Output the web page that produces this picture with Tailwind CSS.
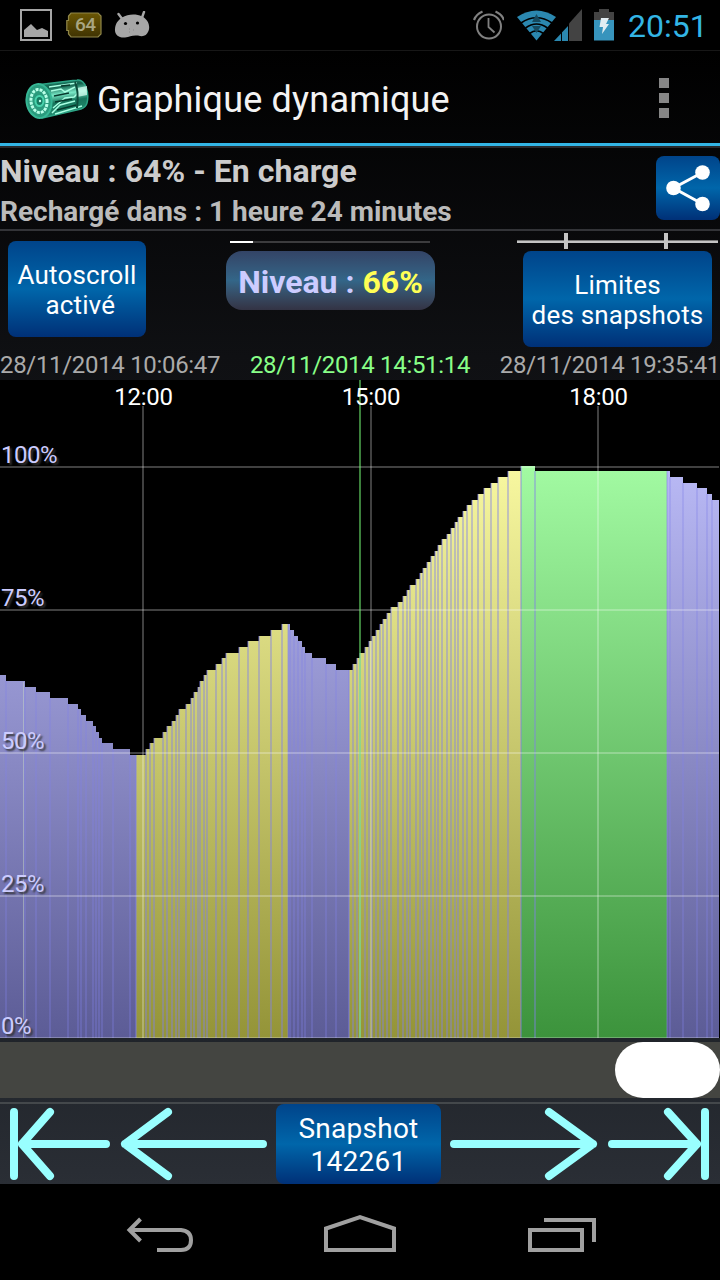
<!DOCTYPE html>
<html lang="fr">

<head>
    <meta charset="UTF-8">
    <meta name="viewport" content="width=device-width, initial-scale=1.0">
    <title>Graphique dynamique</title>
    <script src="https://cdn.jsdelivr.net/npm/@tailwindcss/browser@4"></script>
</head>

<body class="bg-black font-[Roboto,sans-serif] text-white">
    <div class="w-[720px] h-[1280px] flex flex-col overflow-hidden bg-black">

        <!-- Status bar -->
        <div class="h-[50px] shrink-0 flex items-center justify-between pl-5 pr-3.5">
            <div class="flex items-center">
                <svg class="w-8 h-8" viewBox="0 0 32 32">
                    <rect x="1" y="1" width="30" height="30" fill="none" stroke="#a6a6a6" stroke-width="2" />
                    <path d="M4 28V21L11 15L17 21L22 19L28 22V28Z" fill="#a6a6a6" />
                </svg>
                <div class="relative ml-[14px] w-9 h-[26px]">
                    <svg class="absolute inset-0" width="36" height="26" viewBox="0 0 36 26">
                        <defs>
                            <linearGradient id="gold" x1="0" y1="0" x2="0" y2="1">
                                <stop offset="0" stop-color="#6b5704" />
                                <stop offset="1" stop-color="#3f3302" />
                            </linearGradient>
                        </defs>
                        <path d="M5 1H32L35 4V22L32 25H5L2.500 22V18.500H.8V8.500H2.500V4Z" fill="url(#gold)" stroke="#8f8648" stroke-width="1.200" />
                    </svg>
                    <div class="absolute left-[9px] top-[3px] text-[19px] leading-5 tracking-[-0.5px] font-medium text-[#a9a682]">64</div>
                </div>
                <svg class="ml-3 w-[36px] h-[28px]" viewBox="0 0 36 28">
                    <path d="M4.500 3L9 9M30 1L27.500 8" stroke="#a6a6a6" stroke-width="2.400" stroke-linecap="round" />
                    <path d="M8 6.500C14 3 22 2.500 28 5.500C34 8 36.500 15 34.500 20C32.500 25 29 26 24 24.500C18 24 16 25.500 11 26.500C4 27 .5 23 1 18C1.200 13 4 9 8 6.500Z" fill="#a6a6a6" />
                    <circle cx="11.500" cy="12.500" r="1.600" /><circle cx="23.500" cy="12" r="1.600" />
                    <path d="M15.500 17.500v1M15.500 20.500v1M19.500 18.500v1" stroke="#888" />
                </svg>
            </div>
            <div class="flex items-center">
                <svg class="w-8 h-8" viewBox="0 0 32 32" fill="none" stroke="#808080">
                    <circle cx="17" cy="17.500" r="12" stroke-width="2" />
                    <path d="M16.500 9V18L22.500 23.500" stroke-width="1.800" />
                    <path d="M2 11Q4 5.500 10.500 2.500M32 11Q30 5.500 23.500 2.500" stroke-width="2.200" />
                </svg>
                <svg class="ml-[13px] -mr-px w-[66px] h-8" viewBox="0 0 66 32">
                    <path d="M19.500 31.500L0 8Q19.500 -5 39 8Z" fill="#2b88b0" />
                    <g fill="none" stroke="#000" stroke-width="1.700">
                        <path d="M4 14Q19.500 3.500 35 14" />
                        <path d="M8.500 19Q19.500 11 30.500 19" />
                        <path d="M12.500 24.500Q19.500 19 26.500 24.500" />
                    </g>
                    <path d="M19.500 5L24 13H15ZM15 17H24L19.500 24Z" fill="#164b61" />
                    <path d="M37 32L51 17V32Z" fill="#2b88b0" />
                    <path d="M52 32V14.500L65 0V32Z" fill="#434343" />
                    <path d="M44.500 23V32M51.500 15V32" stroke="#000" />
                </svg>
                <svg class="ml-3 w-5 h-8" viewBox="0 0 20 32">
                    <path d="M0 3H5V0H15V3H20V12H0Z" fill="#434343" />
                    <path d="M0 11H20V31.500H0Z" fill="#3794bd" />
                    <path d="M7 9H15L12 15H15L8 25L9 18H5.500Z" fill="#e2edf2" />
                </svg>
                <div class="ml-3.5 w-[78px] pt-px text-[32px] leading-[50px] text-[#33b5e5] whitespace-nowrap">20:51</div>
            </div>
        </div>

        <div class="h-[1134px] shrink-0 flex flex-col bg-[linear-gradient(#000,#0f1013_27%,#1f2329_86%,#2a2e35)]">

            <!-- Action bar -->
            <div class="h-[93px] shrink-0 flex items-center justify-between border-t border-[#171717] pl-[25px] pr-[51px] pt-[2px]">
                <div class="flex items-center pt-[4px]">
                    <svg class="w-[65px] h-[42px]" viewBox="0 0 65 42">
                        <defs>
                            <linearGradient id="metal" x1="0" y1="0" x2=".2" y2="1">
                                <stop offset="0" stop-color="#2a9b7d" />
                                <stop offset=".25" stop-color="#10604c" />
                                <stop offset=".45" stop-color="#79e8c6" />
                                <stop offset=".65" stop-color="#16745b" />
                                <stop offset="1" stop-color="#239072" />
                            </linearGradient>
                        </defs>
                        <path d="M11 6L52 1Q58 0 61 8Q64 16 62 24Q61 28 56 30L17 39Z" fill="url(#metal)" stroke="#2ca385" stroke-width="1.500" />
                        <g fill="none" stroke="#a8ffe2" stroke-width="1.500">
                            <path d="M24 8L52 4M26 12L36 10L40 13L50 8M27 34L35 26L50 22M28 29L40 19L49 18L53 14M30 35L57 27" />
                        </g>
                        <path d="M29 17L44 14M30 23L47 20M32 31L51 26M36 7L45 6" stroke="#07392d" stroke-width="1.500" />
                        <path d="M52 9L62 7V16L52 18Z" fill="#d5fff2" opacity=".75" />
                        <path d="M50 3Q54 11 52 29" fill="none" stroke="#0d4b3b" stroke-width="2" />
                        <ellipse cx="14" cy="22" rx="12.500" ry="17" transform="rotate(-7 14 22)" fill="#2a9b7d" stroke="#37b795" stroke-width="2" />
                        <ellipse cx="14" cy="22" rx="8" ry="11.500" transform="rotate(-7 14 22)" fill="none" stroke="#b8ffe8" stroke-width="3" stroke-dasharray="3 1" />
                        <ellipse cx="14.500" cy="22" rx="4" ry="5" fill="#167b61" stroke="#48d4ad" stroke-width="2" />
                        <circle cx="15" cy="22" r="1.200" fill="#c8fff0" />
                    </svg>
                    <h1 class="ml-[7px] text-[36px] leading-[48px] tracking-[0.19px] text-[#f3f3f3] whitespace-nowrap">Graphique dynamique</h1>
                </div>
                <div class="flex flex-col gap-[5px] w-2.5">
                    <div class="h-2.5 bg-[#868686]"></div>
                    <div class="h-2.5 bg-[#868686]"></div>
                    <div class="h-2.5 bg-[#868686]"></div>
                </div>
            </div>
            <div class="h-[5px] shrink-0 border-t-3 border-[#33b5e5] bg-[#27292b]"></div>

            <!-- Battery state -->
            <div class="h-[83px] shrink-0 flex justify-between border-b-2 border-[#333438] font-bold">
                <div class="whitespace-nowrap">
                    <div class="h-[45px] text-[32px] leading-[46px] tracking-[0.04px] text-[#cccccc]">Niveau : 64% - En charge</div>
                    <div class="text-[28px] leading-[38px] text-[#bbbbbb]">Rechargé dans : 1 heure 24 minutes</div>
                </div>
                <button class="mt-2 w-16 h-16 rounded-lg bg-linear-to-b from-[#00448a] via-[#0066aa] to-[#003077]">
                    <svg class="w-16 h-16" viewBox="0 0 64 64" fill="#fff">
                        <path d="M46.500 16.500L17.500 32L46.500 48" fill="none" stroke="#fff" stroke-width="3" />
                        <circle cx="17.500" cy="32" r="7.300" /><circle cx="46.500" cy="16.500" r="7.300" /><circle cx="46.500" cy="48" r="7.300" />
                    </svg>
                </button>
            </div>

            <!-- Controls -->
            <div class="h-[119px] shrink-0 flex items-start pl-2">
                <button class="mt-[10px] w-[138px] h-24 rounded-lg bg-linear-to-b from-[#00448a] via-[#0066aa] to-[#003077] pt-0.5 text-[26px] leading-[30px] tracking-[0.15px] whitespace-nowrap">Autoscroll<br>&nbsp;activé</button>
                <div class="ml-20 mt-[10px] w-[209px]">
                    <div class="ml-1 w-[200px] h-0.5 bg-[#3c3c3e]"><div class="w-[23px] h-0.5 bg-white"></div></div>
                    <div class="mt-2 h-[59px] rounded-2xl bg-linear-to-b from-[#334466] via-[#336688] to-[#333344] text-center text-[32px] leading-[62px] font-bold text-[#ccccff] whitespace-nowrap">Niveau : <span class="text-[#ffff55]">66%</span></div>
                </div>
                <div class="ml-[82px] w-[203px]">
                    <svg class="block" width="203" height="20" shape-rendering="crispEdges">
                        <path d="M0 9H201V12H0Z" fill="#777" />
                        <path d="M0 10H201V12H0ZM47 2H51V18H47ZM147 2H151V18H147Z" fill="#c4c4c4" />
                    </svg>
                    <button class="ml-[6px] w-[189px] h-24 rounded-lg bg-linear-to-b from-[#00448a] via-[#0066aa] to-[#003077] pt-0.5 text-[26px] leading-[30px] tracking-[0.2px] whitespace-nowrap">Limites<br>des snapshots</button>
                </div>
            </div>
            <div class="h-[30px] shrink-0 flex justify-between text-[24px] leading-[30px] tracking-[-0.32px] text-[#aaaaaa] whitespace-nowrap">
                <span>28/11/2014 10:06:47</span>
                <span class="text-[#88ff88]">28/11/2014 14:51:14</span>
                <span>28/11/2014 19:35:41</span>
            </div>

            <!-- Chart -->
            <svg class="block shrink-0 overflow-visible bg-black" width="720" height="658" viewBox="0 380 720 658" shape-rendering="crispEdges">
                <defs>
                    <linearGradient id="blue" gradientUnits="userSpaceOnUse" x1="0" y1="466" x2="0" y2="1038">
                        <stop offset="0" stop-color="#b9b9f5" /><stop offset="1" stop-color="#5c5c96" />
                    </linearGradient>
                    <linearGradient id="yellow" gradientUnits="userSpaceOnUse" x1="0" y1="466" x2="0" y2="1038">
                        <stop offset="0" stop-color="#f8f8a0" /><stop offset="1" stop-color="#949438" />
                    </linearGradient>
                    <linearGradient id="green" gradientUnits="userSpaceOnUse" x1="0" y1="466" x2="0" y2="1038">
                        <stop offset="0" stop-color="#a2faa2" /><stop offset="1" stop-color="#3c933c" />
                    </linearGradient>
                </defs>
                <g id="bars"></g>
                <g fill="#fff" fill-opacity=".25">
                    <path d="M0 466H719V468H0ZM0 609H719V611H0ZM0 752H719V754H0ZM0 895H719V897H0ZM0 1037H719V1038H0Z" />
                    <path d="M142 406H144V1038H142ZM370 406H372V1038H370ZM597 406H599V1038H597Z" />
                </g>
                <path d="M23 682H24V1038H23Z" fill="#c5d5c5" fill-opacity=".5" />
                <path d="M359 380H361V1038H359Z" fill="#77ff77" fill-opacity=".5" />
                <g class="text-[24px] tracking-[-0.3px]" fill="#fff" text-anchor="middle">
                    <text x="143.500" y="405">12:00</text>
                    <text x="371" y="405">15:00</text>
                    <text x="598.500" y="405">18:00</text>
                </g>
                <g class="text-[24px] tracking-[-0.5px] [text-shadow:2px_2px_2px_#333]" fill="#ccccff">
                    <text x="1" y="463">100%</text>
                    <text x="1" y="606">75%</text>
                    <text x="1" y="749">50%</text>
                    <text x="1" y="892">25%</text>
                    <text x="1" y="1034">0%</text>
                </g>
            </svg>

            <!-- Scroll bar -->
            <div class="h-[64px] shrink-0 flex items-center">
                <div class="w-full h-14 flex justify-end bg-[#444541]">
                    <div class="w-[105px] h-14 rounded-[28px] bg-white"></div>
                </div>
            </div>

            <!-- Snapshot navigation -->
            <div class="h-[82px] shrink-0 flex border-t-2 border-[#44484b]">
                <svg class="shrink-0" width="276" height="80" fill="none" stroke="#99ffff" stroke-width="8" stroke-linecap="round" stroke-linejoin="round">
                    <path d="M14 8V72M50 8L22 40L50 72M22 40H106" />
                    <path d="M168 8L125 40L168 72M125 40H263" />
                </svg>
                <button class="shrink-0 w-[165px] h-20 rounded-lg bg-linear-to-b from-[#00448a] via-[#0066aa] to-[#003077] pt-0.5 text-[28px] leading-[33px] tracking-[0.25px] whitespace-nowrap">Snapshot<br>142261</button>
                <svg class="shrink-0" width="279" height="80" fill="none" stroke="#99ffff" stroke-width="8" stroke-linecap="round" stroke-linejoin="round">
                    <path d="M108 8L152 40L108 72M152 40H13" />
                    <path d="M264 8V72M227 8L256 40L227 72M256 40H171" />
                </svg>
            </div>
        </div>

        <!-- System buttons -->
        <svg class="shrink-0" width="720" height="96" fill="none" stroke="#a0a0a0" stroke-width="4">
            <path d="M140.500 35L129.500 46L140.500 57M130 46H181Q191 47 191 56Q191 66 181 66H157" />
            <path d="M326 66V44.500L360 33L394 44.500V66Z" />
            <path d="M530 46H582V66H530ZM544 36H594V58" />
        </svg>
    </div>

    <script>
        // [color, right edge, [left, top], [left, top], ...]
        const series = [
            ['blue', 136, [0, 675], [6, 681], [25, 687], [36, 692], [50, 698], [68, 704], [78, 709], [81, 715], [86, 721], [93, 726], [96, 732], [99, 738], [102, 743], [113, 749], [130, 755]],
            ['yellow', 288, [136, 755], [146, 749], [150, 743], [154, 738], [163, 732], [167, 726], [172, 721], [176, 715], [179, 709], [186, 704], [191, 698], [194, 692], [198, 687], [200, 681], [204, 675], [207, 670], [216, 664], [222, 658], [226, 653], [239, 647], [248, 641], [259, 636], [271, 630], [282, 624]],
            ['blue', 349, [288, 624], [290, 630], [294, 636], [298, 641], [302, 647], [305, 653], [312, 658], [326, 664], [336, 670]],
            ['yellow', 521, [349, 670], [353, 664], [357, 658], [360, 653], [365, 647], [369, 641], [372, 636], [376, 630], [380, 624], [383, 619], [387, 613], [391, 607], [398, 602], [403, 596], [407, 590], [410, 585], [416, 579], [420, 573], [423, 568], [427, 562], [431, 556], [435, 551], [438, 545], [442, 539], [447, 534], [451, 528], [455, 522], [458, 517], [463, 511], [467, 505], [472, 500], [478, 494], [484, 488], [491, 483], [498, 477], [508, 471]],
            ['green', 667, [521, 466], [535, 471]],
            ['blue', 719, [667, 471], [670, 477], [683, 483], [697, 488], [707, 494], [712, 500]]
        ];

        let html = '';
        series.forEach(([color, end, ...steps]) => {
            steps.forEach(([x, y], i) => {
                const right = i + 1 < steps.length ? steps[i + 1][0] : end;
                html += `<rect x="${x}" y="${y}" width="${right - x}" height="${1038 - y}" fill="url(#${color})" />`;
                // separator on the left edge of each bar
                if (x > 0) {
                    const opacity = color === 'blue' ? 0.3 : 0.42;
                    html += `<rect x="${x - 1}" y="${y}" width="2" height="${1038 - y}" fill="#8080e8" fill-opacity="${opacity}" />`;
                }
            });
        });
        document.getElementById('bars').innerHTML = html;
    </script>
</body>

</html>
